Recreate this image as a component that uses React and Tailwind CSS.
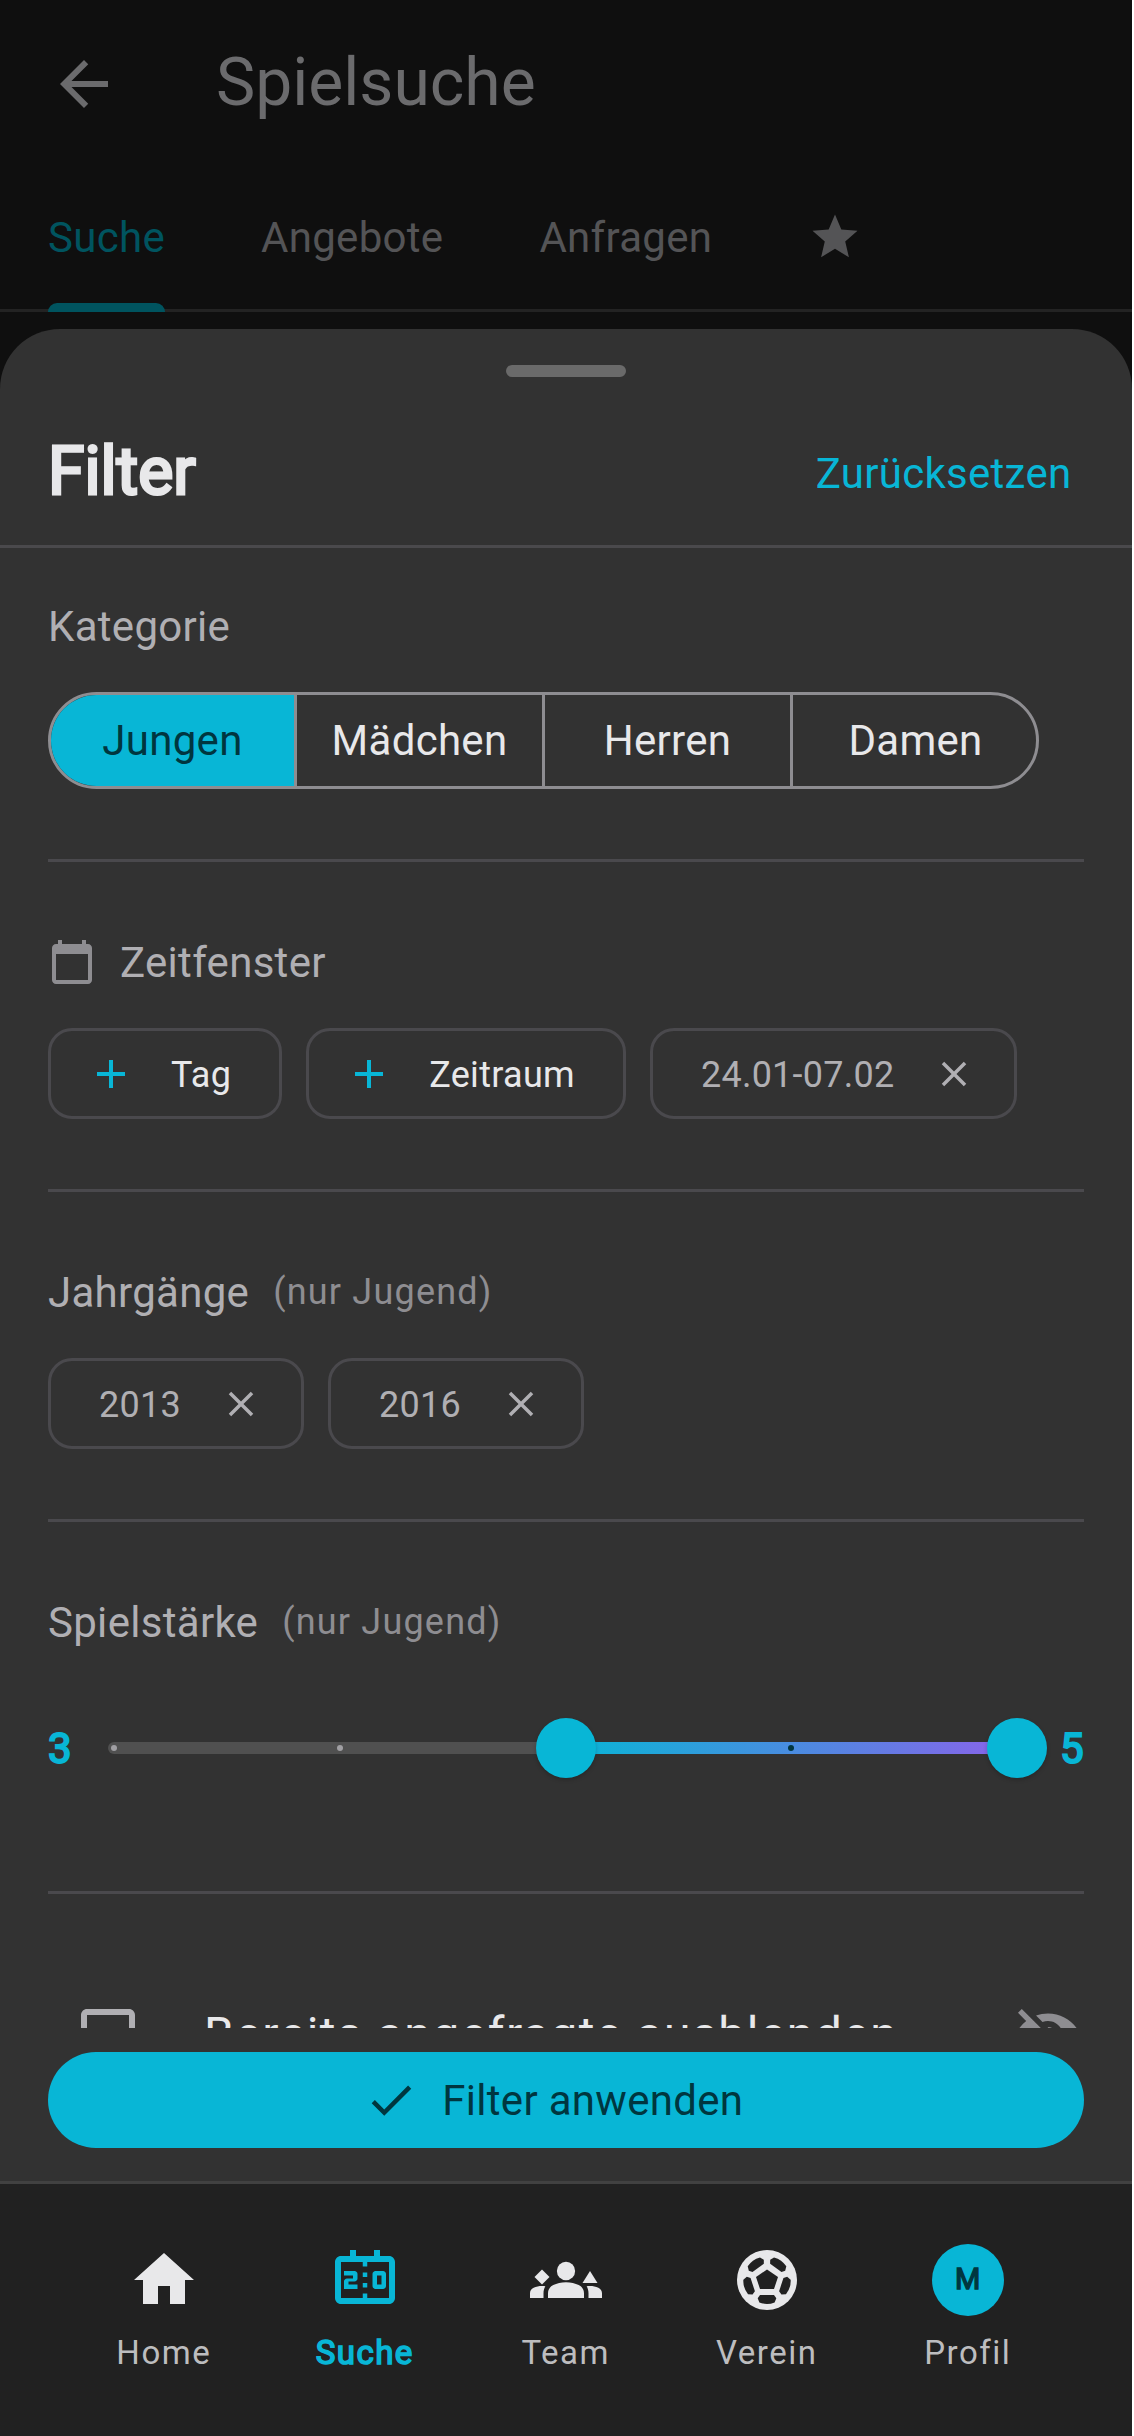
import { useState } from "react";
import {
  MdAdd,
  MdArrowBack,
  MdCalendarToday,
  MdCheck,
  MdCheckBoxOutlineBlank,
  MdClose,
  MdHome,
  MdOutlineScoreboard,
  MdStar,
  MdVisibilityOff,
} from "react-icons/md";

const TABS = ["Suche", "Angebote", "Anfragen"];
const CATEGORIES = ["Jungen", "Mädchen", "Herren", "Damen"];
const LEVELS = [1, 2, 3, 4, 5];

const TeamIcon = () => (
  <svg
    aria-hidden="true"
    className="size-[72px]"
    fill="currentColor"
    viewBox="0 0 24 24"
  >
    <circle cx="12" cy="9" r="3.05" />
    <path d="M12 12.75c1.63 0 3.07.39 4.24.9 1.08.48 1.76 1.56 1.76 2.73V18H6v-1.61c0-1.18.68-2.26 1.76-2.73 1.17-.52 2.61-.91 4.24-.91z" />
    <path d="M1.5 11 4 8.5 6.5 11 4 13.5z" />
    <path d="M5.13 14.1C4.76 14.04 4.39 14 4 14c-.99 0-1.93.21-2.78.58A2.01 2.01 0 0 0 0 16.43V18h4.5v-1.61c0-.83.23-1.61.63-2.29z" />
    <path d="M20 9l-2.5 4h5z" />
    <path d="M18.87 14.1c.37-.06.74-.1 1.13-.1.99 0 1.93.21 2.78.58.74.32 1.22 1.04 1.22 1.85V18h-4.5v-1.61c0-.83-.23-1.61-.63-2.29z" />
  </svg>
);

const BallIcon = () => (
  <svg aria-hidden="true" className="size-[72px]" viewBox="-36 -36 72 72">
    <circle fill="#e8e8ea" r="30" />
    <g fill="#212121">
      <path d="M0-10.5 11-3 7 9H-7L-11-3z" />
      {[0, 72, 144, 216, 288].map((angle) => (
        <path
          d="M-7 15H7L9.3 18.2 7.6 22.4Q0 25.4-7.6 22.4L-9.3 18.2z"
          key={angle}
          transform={`rotate(${angle})`}
        />
      ))}
    </g>
  </svg>
);

const Avatar = () => (
  <span className="flex size-[72px] items-center justify-center rounded-full bg-[#08b6d6] text-[29px] leading-none text-[#00363f] [-webkit-text-stroke:1.4px]">
    <span className="-mt-px">M</span>
  </span>
);

const NAV_ITEMS = [
  { label: "Home", icon: <MdHome className="size-[72px]" /> },
  {
    label: "Suche",
    icon: <MdOutlineScoreboard className="size-[72px]" />,
    active: true,
  },
  { label: "Team", icon: <TeamIcon /> },
  { label: "Verein", icon: <BallIcon /> },
  { label: "Profil", icon: <Avatar /> },
];

const AddChip = ({ label }) => (
  <button
    className="flex h-[91px] items-center gap-9 rounded-3xl border-3 border-[#4a494d] pr-12 pl-9 text-[36px] tracking-[0.3px] text-[#e8e8ea]"
    type="button"
  >
    <MdAdd className="size-12 text-[#08b6d6]" />
    <span className="pt-0.5">{label}</span>
  </button>
);

const ValueChip = ({ label, onRemove }) => (
  <button
    className="flex h-[91px] items-center gap-[39px] rounded-3xl border-3 border-[#4a494d] pr-[39px] pl-12 text-[36px] tracking-[0.25px] text-[#b0afb3]"
    onClick={onRemove}
    type="button"
  >
    <span className="pt-0.5">{label}</span>
    <MdClose className="size-[42px]" />
  </button>
);

const SectionTitle = ({ icon, hint, children }) => (
  <h3 className="flex h-12 items-center gap-6 text-[42px] leading-[48px] tracking-[0.3px] text-[#b0afb3]">
    {icon}
    <span className="pt-0.5">{children}</span>
    {hint && (
      <span className="text-[36px] tracking-[1.2px] text-[#8e8d91]">
        {hint}
      </span>
    )}
  </h3>
);

const RangeSlider = ({ from, to }) => {
  const percent = (level) =>
    ((level - LEVELS[0]) / (LEVELS.length - 1)) * 100;

  return (
    <div className="flex h-[60px] w-[915px] items-center rounded-full px-1.5">
      <div className="relative h-3 flex-1">
        <div className="absolute -inset-x-1.5 inset-y-0 rounded-full bg-[#505050]" />
        <div
          className="absolute inset-y-0 bg-linear-to-r/srgb from-[#08b6d6] to-[#8b62ea]"
          style={{
            left: `${percent(from)}%`,
            right: `${100 - percent(to)}%`,
          }}
        />
        {LEVELS.map((level) => (
          <span
            className={`absolute top-[3px] size-1.5 -translate-x-1/2 rounded-full ${
              level > from ? "bg-[#00363f]" : "bg-[#a09fa3]"
            }`}
            key={level}
            style={{ left: `${percent(level)}%` }}
          />
        ))}
        {[from, to].map((level) => (
          <span
            className="absolute -top-6 size-[60px] -translate-x-1/2 rounded-full bg-[#08b6d6] shadow-[0_2px_4px_rgba(0,0,0,0.2)]"
            key={level}
            style={{ left: `${percent(level)}%` }}
          />
        ))}
      </div>
    </div>
  );
};

const App = () => {
  const [category, setCategory] = useState("Jungen");
  const [years, setYears] = useState(["2013", "2016"]);

  return (
    <div className="h-[2436px] w-[1134px] bg-white">
      <div className="flex h-full w-[1131.5px] flex-col overflow-hidden bg-[#0f0f0f] font-[Roboto,sans-serif]">
        {/* App Bar */}
        <header className="flex h-[168px] shrink-0 items-center gap-24 px-12 text-[#6b6b6d]">
          <MdArrowBack className="size-[72px]" />
          <h1 className="-mt-[3px] text-[66px] leading-[84px]">Spielsuche</h1>
        </header>

        {/* Tabs */}
        <nav className="flex h-36 shrink-0 gap-24 border-b-3 border-[#232323] px-12 text-[42px] tracking-[0.3px] text-[#545456]">
          {TABS.map((tab, index) => (
            <div
              className={`relative flex items-center pb-[3px] ${
                index === 0 ? "text-[#00545f]" : ""
              }`}
              key={tab}
            >
              {tab}
              {index === 0 && (
                <span className="absolute inset-x-0 -bottom-[3px] h-[9px] rounded-t-[9px] bg-[#00545f]" />
              )}
            </div>
          ))}
          <div className="flex items-center pb-[3px]">
            <MdStar className="size-[54px]" />
          </div>
        </nav>

        {/* Filter Sheet */}
        <section className="mt-[17px] flex h-[1852px] shrink-0 flex-col rounded-t-[60px] bg-[#323232]">
          <div className="mt-9 h-3 w-[120px] shrink-0 self-center rounded-full bg-[#6a6a6a]" />
          <div className="flex h-[171px] shrink-0 items-center justify-between border-b-3 border-[#4a494c] pt-[21px] pr-[60px] pl-12">
            <h2 className="text-[66px] leading-[84px] text-[#e8e8ea] [-webkit-text-stroke:3px]">
              Filter
            </h2>
            <button
              className="mt-1 text-[42px] tracking-[0.3px] text-[#08b6d6]"
              type="button"
            >
              Zurücksetzen
            </button>
          </div>

          <div className="h-[1480px] shrink-0 overflow-hidden px-12">
            <div className="pt-[54px] pb-[70px]">
              <SectionTitle>Kategorie</SectionTitle>
              <div className="mt-[42px] grid h-[97px] w-[991px] grid-cols-[246px_248px_248px_1fr] overflow-hidden rounded-full border-3 border-[#8e8d91] text-[42px] tracking-[0.3px]">
                {CATEGORIES.map((item) => (
                  <button
                    className={`border-[#8e8d91] not-last:border-r-3 last:pl-0.5 ${
                      item === category
                        ? "bg-[#08b6d6] text-[#00363f]"
                        : "text-[#e8e8ea]"
                    }`}
                    key={item}
                    onClick={() => setCategory(item)}
                    type="button"
                  >
                    {item}
                  </button>
                ))}
              </div>
            </div>

            <div className="border-t-3 border-[#4a494d] pt-[76px] pb-[70px]">
              <SectionTitle
                icon={<MdCalendarToday className="size-12 text-[#8e8d91]" />}
              >
                Zeitfenster
              </SectionTitle>
              <div className="mt-[42px] flex gap-6">
                <AddChip label="Tag" />
                <AddChip label="Zeitraum" />
                <ValueChip label="24.01-07.02" />
              </div>
            </div>

            <div className="border-t-3 border-[#4a494d] pt-[76px] pb-[70px]">
              <SectionTitle hint="(nur Jugend)">Jahrgänge</SectionTitle>
              <div className="mt-[42px] flex h-[91px] gap-6">
                {years.map((year) => (
                  <ValueChip
                    key={year}
                    label={year}
                    onRemove={() => setYears(years.filter((y) => y !== year))}
                  />
                ))}
              </div>
            </div>

            <div className="border-t-3 border-[#4a494d] pt-[76px] pb-[113px]">
              <SectionTitle hint="(nur Jugend)">Spielstärke</SectionTitle>
              <div className="mt-[72px] flex items-center text-[42px] leading-[60px] text-[#08b6d6] [-webkit-text-stroke:2px]">
                <span className="w-[60px] translate-y-px">3</span>
                <RangeSlider from={3} to={5} />
                <span className="flex-1 translate-y-px text-right">5</span>
              </div>
            </div>

            <div className="flex items-center border-t-3 border-[#4a494d] pt-[106px] pl-6">
              <MdCheckBoxOutlineBlank className="size-[72px] text-[#b0afb3]" />
              <span className="ml-[60px] flex-1 pb-0.5 text-[48px] leading-[70px] tracking-[1.5px] text-[#e8e8ea]">
                Bereits angefragte ausblenden
              </span>
              <MdVisibilityOff className="size-[72px] text-[#8e8d91]" />
            </div>
          </div>

          <div className="px-12 pt-6">
            <button
              className="flex h-24 w-full items-center justify-center gap-6 rounded-full bg-[#08b6d6] pr-6 text-[42px] tracking-[0.3px] text-[#00363f]"
              type="button"
            >
              <MdCheck className="size-[54px]" />
              Filter anwenden
            </button>
          </div>
        </section>

        {/* Bottom Navigation */}
        <nav className="flex flex-1 justify-center border-t-3 border-[#414141] bg-[#212121] pt-[60px]">
          {NAV_ITEMS.map(({ label, icon, active }) => (
            <div
              className={`flex w-[201px] flex-col items-center ${
                active ? "text-[#08b6d6]" : "text-[#e8e8ea]"
              }`}
              key={label}
            >
              {icon}
              <span
                className={`mt-[17px] text-[33px] leading-10 tracking-[1.5px] ${
                  active ? "[-webkit-text-stroke:1.6px]" : "text-[#bdbdbf]"
                }`}
              >
                {label}
              </span>
            </div>
          ))}
        </nav>
      </div>
    </div>
  );
};

export default App;
